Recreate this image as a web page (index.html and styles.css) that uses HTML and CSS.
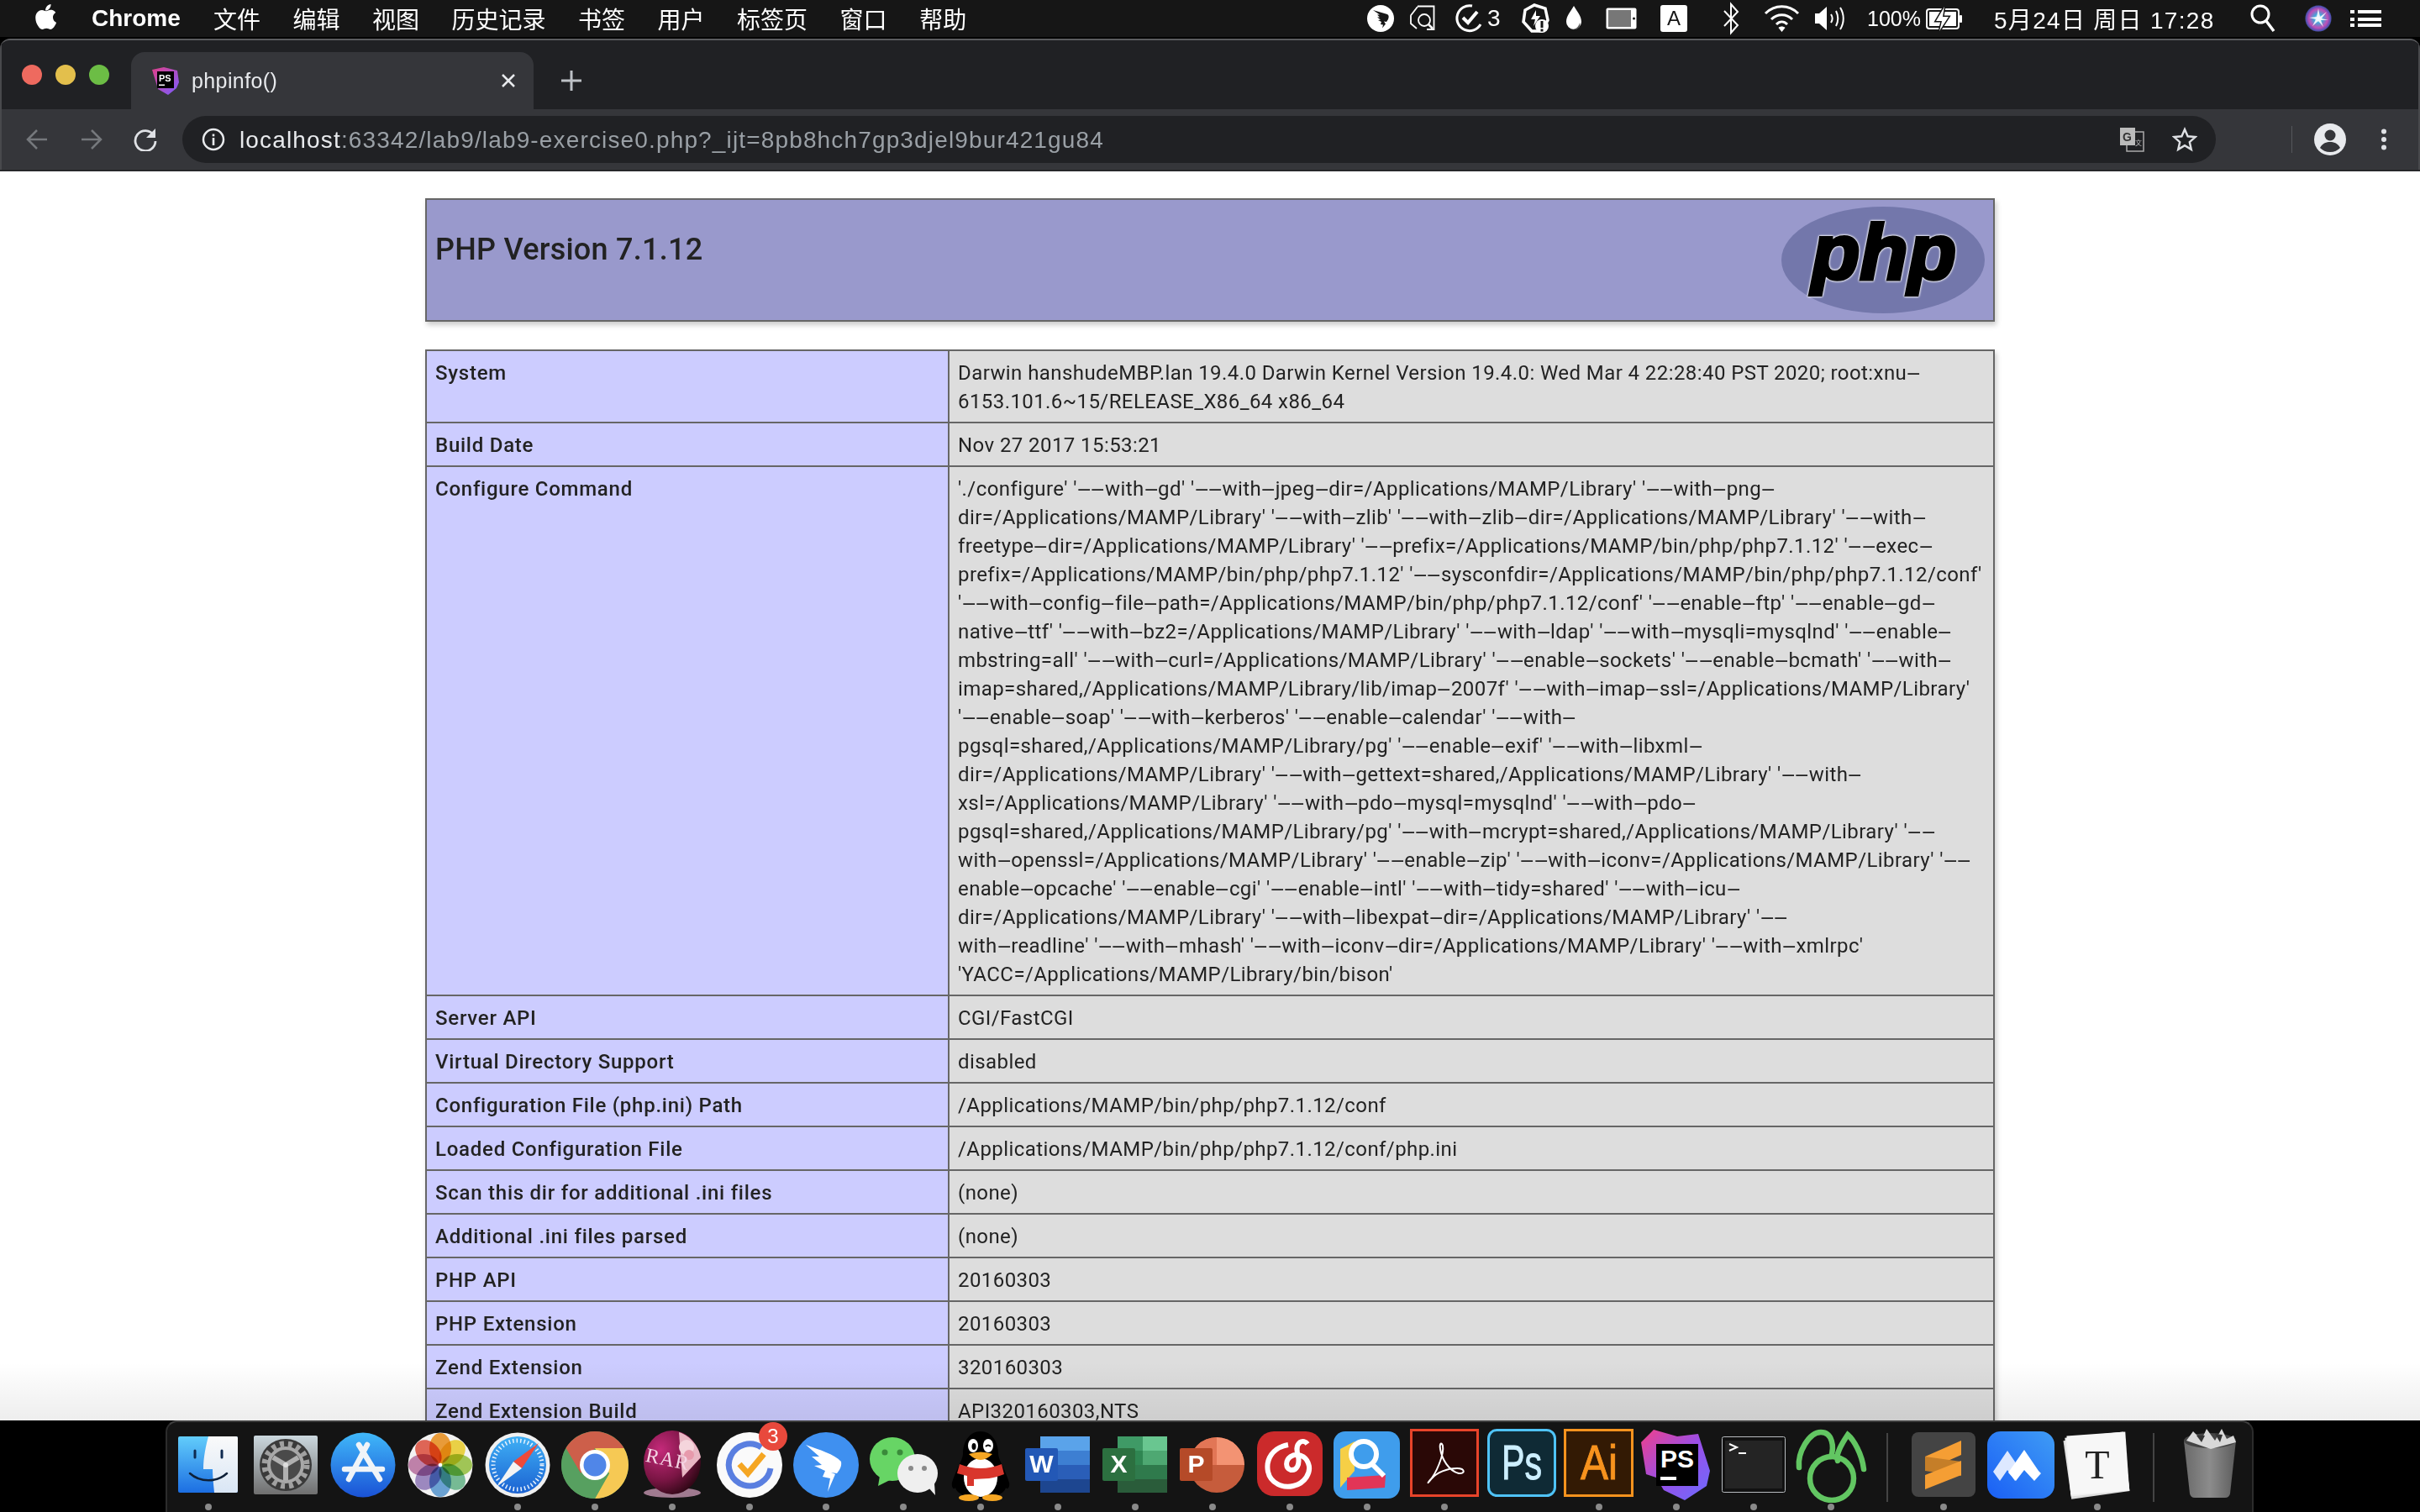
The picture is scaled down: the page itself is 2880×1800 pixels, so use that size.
FILE: index.html
```html
<!DOCTYPE html>
<html lang="zh">
<head>
<meta charset="utf-8">
<title>phpinfo()</title>
<link rel="stylesheet" href="styles.css">
</head>
<body>
<div class="desktop">
  <header class="menubar">
    <svg class="apple" width="26" height="32" viewBox="0 0 26 32"><path fill="#fff" d="M18.5 1c.2 2.2-.6 3.900-1.700 5.200-1.200 1.400-3 2.400-4.700 2.300-.2-2 .7-3.900 1.700-5.100C15 2 17 1 18.500 1zM24.300 11c-.2.100-3.400 2-3.300 5.800.1 4.500 4 6 4.100 6-.1.100-.6 2.200-2.100 4.300-1.300 1.900-2.600 3.700-4.700 3.800-2 0-2.700-1.200-5-1.200s-3.100 1.200-5 1.300c-2 .1-3.600-2-4.900-3.900C.8 23.300-1.200 16.500 1.600 11.800 3 9.400 5.400 7.900 8 7.900c2 0 3.800 1.300 5 1.300 1.200 0 3.300-1.600 5.600-1.400 1 0 3.800.4 5.700 3.200z"/></svg>
    <span class="menu-app">Chrome</span>
    <nav class="menu-items"><span>文件</span><span>编辑</span><span>视图</span><span>历史记录</span><span>书签</span><span>用户</span><span>标签页</span><span>窗口</span><span>帮助</span></nav>
    <div class="tray">
      <svg width="51" height="44" viewBox="0 0 51 44"><circle cx="16" cy="22" r="16" fill="#fff"/><path fill="#161616" d="M7 12l17 5c2 1 2 3 1 6l-2 3-3-.5 2 3-4 5 1-4-3-.5 1-3-4-2 3-.5-4-3 3 0-3-3 3 0z"/></svg>
      <svg width="53" height="44" viewBox="0 0 53 44"><g fill="none" stroke="#fff" stroke-width="1.800"><path d="M9 7.500H28.500V35H20"/><path d="M.5 19L9 8M1 19v9l7 6"/><circle cx="17" cy="24" r="7"/><path d="M22 29l5 5" stroke-width="2.500"/></g></svg>
      <svg width="39" height="44" viewBox="0 0 39 44"><path d="M21 7A15 15 0 1 0 31 29" fill="none" stroke="#fff" stroke-width="3"/><path d="M10 21l6 6 11-13" fill="none" stroke="#fff" stroke-width="4"/></svg>
      <span class="tray-num">3</span>
      <svg width="52" height="44" viewBox="0 0 52 44"><path d="M15 6l13 4 3 14-7 13-12 0-10-11 2-14z" fill="none" stroke="#fff" stroke-width="3.500"/><path d="M17 12l-6 11 5 0-2 8 8-12-5 0z" fill="#fff"/><circle cx="24" cy="31" r="8" fill="#fff"/><rect x="22.500" y="25" width="3" height="8" fill="#161616"/><rect x="22.500" y="34.500" width="3" height="3" fill="#161616"/></svg>
      <svg width="47" height="44" viewBox="0 0 47 44"><path d="M10 7c4 7 9 12 9 19a9 9 0 0 1-18 0c0-7 5-12 9-19z" fill="#fff"/><path d="M17 27c-1 5-5 8-9 8 5 1 11-2 9-8z" fill="#555"/></svg>
      <svg width="66" height="44" viewBox="0 0 66 44"><rect x="1.500" y="9.500" width="36" height="25" rx="2" fill="#fff"/><rect x="4" y="12" width="27" height="20" fill="#777"/><circle cx="34.500" cy="22" r="1.500" fill="#161616"/></svg>
      <div class="tray-a"><span>A</span></div>
      <svg width="51" height="44" viewBox="0 0 51 44"><path d="M4 13l16 17-8 9V5l8 9-16 17" fill="none" stroke="#fff" stroke-width="2"/></svg>
      <svg width="60" height="44" viewBox="0 0 60 44"><g fill="none" stroke="#fff" stroke-width="3"><path d="M2 16c11-11 28-11 39 0"/><path d="M9 23c7-7 18-7 25 0"/><path d="M15 29c4-4 9-4 13 0"/></g><path d="M21.500 38l-4-5c2-2 6-2 8 0z" fill="#fff"/></svg>
      <svg width="63" height="44" viewBox="0 0 63 44"><path d="M1 16h5l9-8v28l-9-8H1z" fill="#fff"/><path d="M20 17c2 3 2 7 0 10M26 13c3 6 3 12 0 18M31 9c5 8 5 18 0 26" fill="none" stroke="#fff" stroke-width="2"/></svg>
      <span class="tray-pct">100%</span>
      <svg width="81" height="44" viewBox="0 0 81 44"><rect x="1" y="11" width="38" height="23" rx="3" fill="none" stroke="#fff" stroke-width="2"/><rect x="4" y="14" width="32" height="17" fill="#fff"/><rect x="40" y="18" width="3" height="9" rx="1" fill="#fff"/><path d="M22 8l-10 17h7l-3 12 11-17h-7z" fill="#161616" stroke="#161616" stroke-width="3"/><path d="M22 8l-10 17h7l-3 12 11-17h-7z" fill="#fff"/></svg>
      <span class="tray-date">5月24日 周日 17:28</span>
      <svg width="65" height="44" viewBox="0 0 65 44"><circle cx="12" cy="17" r="10" fill="none" stroke="#fff" stroke-width="3"/><path d="M19 25l9 12" stroke="#fff" stroke-width="3.500"/></svg>
      <svg width="54" height="44" viewBox="0 0 54 44"><defs><radialGradient id="siri" cx=".5" cy=".5" r=".55"><stop offset="0" stop-color="#e8f0ff"/><stop offset=".3" stop-color="#44a6d8"/><stop offset=".65" stop-color="#c04fb8"/><stop offset=".9" stop-color="#3f4fb0"/><stop offset="1" stop-color="#cfcfe0"/></radialGradient></defs><circle cx="16" cy="22" r="15.500" fill="url(#siri)"/><path d="M16 10l2 10 8-6-6 8 8 2-9 0 3 8-6-7-7 6 4-8-8-2 9-1z" fill="#fff" opacity=".85"/></svg>
      <svg width="83" height="44" viewBox="0 0 83 44"><g fill="#fff"><rect x="0" y="12" width="5" height="4"/><rect x="9" y="12" width="28" height="4"/><rect x="0" y="21" width="5" height="4"/><rect x="9" y="21" width="28" height="4"/><rect x="0" y="28" width="5" height="4"/><rect x="9" y="28" width="28" height="4"/></g></svg>
    </div>
  </header>

  <main class="browser">
    <div class="tabstrip">
      <div class="lights"><i class="light red"></i><i class="light yellow"></i><i class="light green"></i></div>
      <div class="tab">
        <svg class="favicon" width="33" height="33" viewBox="0 0 33 33"><defs><linearGradient id="fav" x1="0" y1="0" x2="1" y2="1"><stop offset="0" stop-color="#e0408a"/><stop offset="1" stop-color="#7a5cff"/></linearGradient></defs><path d="M1 3l14-3 16 4 2 14-3 7-10 8-12-7z" fill="url(#fav)"/><rect x="7" y="5" width="20" height="20" fill="#000"/><text class="fav-text" x="9" y="17">PS</text><rect x="9" y="20.500" width="7" height="1.500" fill="#fff"/></svg>
        <span class="tab-title">phpinfo()</span>
        <svg class="tab-close" width="18" height="18" viewBox="0 0 18 18"><path d="M2 2l14 14M16 2L2 16" stroke="#e8eaed" stroke-width="2.500"/></svg>
      </div>
      <svg class="newtab" width="24" height="24" viewBox="0 0 24 24"><path d="M12 0v24M0 12h24" stroke="#bdc1c6" stroke-width="3"/></svg>
    </div>
    <div class="toolbar">
      <svg class="nav-back" width="26" height="26" viewBox="0 0 26 26"><path d="M25 13H2M13 2L2 13l11 11" fill="none" stroke="#75787c" stroke-width="2.500"/></svg>
      <svg class="nav-fwd" width="26" height="26" viewBox="0 0 26 26"><path d="M1 13h23M13 2l11 11-11 11" fill="none" stroke="#75787c" stroke-width="2.500"/></svg>
      <svg class="nav-reload" width="28" height="28" viewBox="0 0 28 28"><path d="M24 9A12 12 0 1 0 26 16" fill="none" stroke="#dfe1e5" stroke-width="2.800"/><path d="M26 1v11H15z" fill="#dfe1e5"/></svg>
      <div class="omnibox">
        <svg class="info" width="28" height="28" viewBox="0 0 28 28"><circle cx="14" cy="14" r="12" fill="none" stroke="#e8eaed" stroke-width="2.500"/><rect x="12.700" y="12" width="2.600" height="9" fill="#e8eaed"/><rect x="12.700" y="7.500" width="2.600" height="2.800" fill="#e8eaed"/></svg>
        <span class="url"><b class="url-host">localhost</b>:63342/lab9/lab9-exercise0.php?_ijt=8pb8hch7gp3djel9bur421gu84</span>
        <svg class="translate" width="30" height="30" viewBox="0 0 30 30"><rect x="9" y="6" width="20" height="23" fill="none" stroke="#aaa" stroke-width="1.500"/><rect x="1" y="1" width="18" height="21" fill="#bbb"/><text class="tr-g" x="4" y="17">G</text><text class="tr-z" x="19" y="22">文</text></svg>
        <svg class="star" width="30" height="30" viewBox="0 0 30 30"><path d="M15 3l3.600 8.300 9 .8-6.800 6 2 8.800-7.800-4.700-7.800 4.700 2-8.800-6.800-6 9-.8z" fill="none" stroke="#dfe1e5" stroke-width="2.400"/></svg>
      </div>
      <i class="tool-sep"></i>
      <svg class="profile" width="38" height="38" viewBox="0 0 38 38"><circle cx="19" cy="19" r="19" fill="#e8eaed"/><circle cx="19" cy="14" r="6.500" fill="#35363a"/><path d="M7 29c3-6 8-7 12-7s9 1 12 7c-3 3-7 5-12 5s-9-2-12-5z" fill="#35363a"/></svg>
      <svg class="dots" width="8" height="26" viewBox="0 0 8 26"><circle cx="4" cy="3.500" r="3" fill="#dfe1e5"/><circle cx="4" cy="13" r="3" fill="#dfe1e5"/><circle cx="4" cy="22.500" r="3" fill="#dfe1e5"/></svg>
    </div>

    <div class="page">
      <table class="php-head">
        <tr><td class="h-cell"><div class="h-row"><h1>PHP Version 7.1.12</h1>
          <svg class="php-logo" width="242" height="127" viewBox="0 0 242 127"><defs><linearGradient id="logo" x1="0" y1="0" x2="1" y2="1"><stop offset="0" stop-color="#8a8ec0"/><stop offset=".15" stop-color="#7377ab"/><stop offset=".85" stop-color="#7377ab"/><stop offset="1" stop-color="#4c4f8c"/></linearGradient></defs><ellipse cx="121" cy="63.500" rx="121" ry="63.500" fill="url(#logo)"/><text class="php-word" x="36" y="86" textLength="172" lengthAdjust="spacingAndGlyphs">php</text></svg>
        </div></td></tr>
      </table>
      <table class="php-info">
        <tr><td class="e">System</td><td class="v">Darwin hanshudeMBP.lan 19.4.0 Darwin Kernel Version 19.4.0: Wed Mar 4 22:28:40 PST 2020; root:xnu<b>-</b><br>6153.101.6~15/RELEASE_X86_64 x86_64</td></tr>
        <tr><td class="e">Build Date</td><td class="v">Nov 27 2017 15:53:21</td></tr>
        <tr><td class="e">Configure Command</td><td class="v">'./configure' '<b>-</b><b>-</b>with<b>-</b>gd' '<b>-</b><b>-</b>with<b>-</b>jpeg<b>-</b>dir=/Applications/MAMP/Library' '<b>-</b><b>-</b>with<b>-</b>png<b>-</b><br>dir=/Applications/MAMP/Library' '<b>-</b><b>-</b>with<b>-</b>zlib' '<b>-</b><b>-</b>with<b>-</b>zlib<b>-</b>dir=/Applications/MAMP/Library' '<b>-</b><b>-</b>with<b>-</b><br>freetype<b>-</b>dir=/Applications/MAMP/Library' '<b>-</b><b>-</b>prefix=/Applications/MAMP/bin/php/php7.1.12' '<b>-</b><b>-</b>exec<b>-</b><br>prefix=/Applications/MAMP/bin/php/php7.1.12' '<b>-</b><b>-</b>sysconfdir=/Applications/MAMP/bin/php/php7.1.12/conf'<br>'<b>-</b><b>-</b>with<b>-</b>config<b>-</b>file<b>-</b>path=/Applications/MAMP/bin/php/php7.1.12/conf' '<b>-</b><b>-</b>enable<b>-</b>ftp' '<b>-</b><b>-</b>enable<b>-</b>gd<b>-</b><br>native<b>-</b>ttf' '<b>-</b><b>-</b>with<b>-</b>bz2=/Applications/MAMP/Library' '<b>-</b><b>-</b>with<b>-</b>ldap' '<b>-</b><b>-</b>with<b>-</b>mysqli=mysqlnd' '<b>-</b><b>-</b>enable<b>-</b><br>mbstring=all' '<b>-</b><b>-</b>with<b>-</b>curl=/Applications/MAMP/Library' '<b>-</b><b>-</b>enable<b>-</b>sockets' '<b>-</b><b>-</b>enable<b>-</b>bcmath' '<b>-</b><b>-</b>with<b>-</b><br>imap=shared,/Applications/MAMP/Library/lib/imap<b>-</b>2007f' '<b>-</b><b>-</b>with<b>-</b>imap<b>-</b>ssl=/Applications/MAMP/Library'<br>'<b>-</b><b>-</b>enable<b>-</b>soap' '<b>-</b><b>-</b>with<b>-</b>kerberos' '<b>-</b><b>-</b>enable<b>-</b>calendar' '<b>-</b><b>-</b>with<b>-</b><br>pgsql=shared,/Applications/MAMP/Library/pg' '<b>-</b><b>-</b>enable<b>-</b>exif' '<b>-</b><b>-</b>with<b>-</b>libxml<b>-</b><br>dir=/Applications/MAMP/Library' '<b>-</b><b>-</b>with<b>-</b>gettext=shared,/Applications/MAMP/Library' '<b>-</b><b>-</b>with<b>-</b><br>xsl=/Applications/MAMP/Library' '<b>-</b><b>-</b>with<b>-</b>pdo<b>-</b>mysql=mysqlnd' '<b>-</b><b>-</b>with<b>-</b>pdo<b>-</b><br>pgsql=shared,/Applications/MAMP/Library/pg' '<b>-</b><b>-</b>with<b>-</b>mcrypt=shared,/Applications/MAMP/Library' '<b>-</b><b>-</b><br>with<b>-</b>openssl=/Applications/MAMP/Library' '<b>-</b><b>-</b>enable<b>-</b>zip' '<b>-</b><b>-</b>with<b>-</b>iconv=/Applications/MAMP/Library' '<b>-</b><b>-</b><br>enable<b>-</b>opcache' '<b>-</b><b>-</b>enable<b>-</b>cgi' '<b>-</b><b>-</b>enable<b>-</b>intl' '<b>-</b><b>-</b>with<b>-</b>tidy=shared' '<b>-</b><b>-</b>with<b>-</b>icu<b>-</b><br>dir=/Applications/MAMP/Library' '<b>-</b><b>-</b>with<b>-</b>libexpat<b>-</b>dir=/Applications/MAMP/Library' '<b>-</b><b>-</b><br>with<b>-</b>readline' '<b>-</b><b>-</b>with<b>-</b>mhash' '<b>-</b><b>-</b>with<b>-</b>iconv<b>-</b>dir=/Applications/MAMP/Library' '<b>-</b><b>-</b>with<b>-</b>xmlrpc'<br>'YACC=/Applications/MAMP/Library/bin/bison'</td></tr>
        <tr><td class="e">Server API</td><td class="v">CGI/FastCGI</td></tr>
        <tr><td class="e">Virtual Directory Support</td><td class="v">disabled</td></tr>
        <tr><td class="e">Configuration File (php.ini) Path</td><td class="v">/Applications/MAMP/bin/php/php7.1.12/conf</td></tr>
        <tr><td class="e">Loaded Configuration File</td><td class="v">/Applications/MAMP/bin/php/php7.1.12/conf/php.ini</td></tr>
        <tr><td class="e">Scan this dir for additional .ini files</td><td class="v">(none)</td></tr>
        <tr><td class="e">Additional .ini files parsed</td><td class="v">(none)</td></tr>
        <tr><td class="e">PHP API</td><td class="v">20160303</td></tr>
        <tr><td class="e">PHP Extension</td><td class="v">20160303</td></tr>
        <tr><td class="e">Zend Extension</td><td class="v">320160303</td></tr>
        <tr><td class="e">Zend Extension Build</td><td class="v">API320160303,NTS</td></tr>
      </table>
    </div>
  </main>

  <footer class="dock-row">
    <div class="dock">
      <div class="slot run"><svg width="92" height="96" viewBox="0 0 92 96"><defs><linearGradient id="fa" x1="0" y1="0" x2="0" y2="1"><stop offset="0" stop-color="#62cdfb"/><stop offset="1" stop-color="#1c6ee2"/></linearGradient><linearGradient id="fb" x1="0" y1="0" x2="0" y2="1"><stop offset="0" stop-color="#fafafa"/><stop offset="1" stop-color="#d9e6f5"/></linearGradient></defs><rect x="10" y="17" width="71" height="67" rx="2" fill="url(#fa)"/><path d="M46 17h33a2 2 0 0 1 2 2v63a2 2 0 0 1-2 2H53c-1-10-2-20-2-28H40c0-14 3-28 6-39z" fill="url(#fb)"/><path d="M30 34v8M62 34v8" stroke="#0e2a50" stroke-width="3" stroke-linecap="round"/><path d="M24 61c12 11 32 11 44 0" fill="none" stroke="#0e2038" stroke-width="2.500" stroke-linecap="round"/></svg><i class="dot"></i></div>
      <div class="slot"><svg width="92" height="96" viewBox="0 0 92 96"><defs><linearGradient id="sp" x1="0" y1="0" x2="0" y2="1"><stop offset="0" stop-color="#cbd8de"/><stop offset="1" stop-color="#6f6f6f"/></linearGradient></defs><rect x="8" y="16" width="76" height="70" rx="2" fill="url(#sp)"/><circle cx="46" cy="51" r="31" fill="#3a3a3a"/><circle cx="46" cy="51" r="25" fill="none" stroke="#a0a0a0" stroke-width="7" stroke-dasharray="5 5"/><circle cx="46" cy="51" r="20" fill="#4a4a4a" stroke="#a8a8a8" stroke-width="4"/><path d="M46 51l-15-9M46 51l15-9M46 51v18" stroke="#b0b0b0" stroke-width="6"/><circle cx="46" cy="51" r="3" fill="#ddd"/></svg><i class="dot off"></i></div>
      <div class="slot"><svg width="92" height="96" viewBox="0 0 92 96"><defs><linearGradient id="as" x1="0" y1="0" x2="0" y2="1"><stop offset="0" stop-color="#40b8f9"/><stop offset="1" stop-color="#1a52d6"/></linearGradient></defs><circle cx="46" cy="51" r="38.500" fill="url(#as)"/><path d="M41 27l25 41M51 27L29 68M24 56h45" stroke="#f0f4f8" stroke-width="6.500" stroke-linecap="round"/></svg><i class="dot off"></i></div>
      <div class="slot"><svg width="92" height="96" viewBox="0 0 92 96"><circle cx="46" cy="51" r="38.500" fill="#f2f2f2"/><g class="petals"><ellipse cx="46" cy="31" rx="13" ry="18" fill="#f5a33c" transform="rotate(0 46 51)"/><ellipse cx="46" cy="31" rx="13" ry="18" fill="#f6dc4a" transform="rotate(45 46 51)"/><ellipse cx="46" cy="31" rx="13" ry="18" fill="#a9d05a" transform="rotate(90 46 51)"/><ellipse cx="46" cy="31" rx="13" ry="18" fill="#7cc49c" transform="rotate(135 46 51)"/><ellipse cx="46" cy="31" rx="13" ry="18" fill="#70aade" transform="rotate(180 46 51)"/><ellipse cx="46" cy="31" rx="13" ry="18" fill="#a48fca" transform="rotate(225 46 51)"/><ellipse cx="46" cy="31" rx="13" ry="18" fill="#c888b2" transform="rotate(270 46 51)"/><ellipse cx="46" cy="31" rx="13" ry="18" fill="#ea6a5a" transform="rotate(315 46 51)"/></g><circle cx="46" cy="51" r="2" fill="#fff"/></svg><i class="dot off"></i></div>
      <div class="slot run"><svg width="92" height="96" viewBox="0 0 92 96"><defs><linearGradient id="sf" x1="0" y1="0" x2="0" y2="1"><stop offset="0" stop-color="#3fb0f5"/><stop offset="1" stop-color="#1b62d2"/></linearGradient></defs><circle cx="46" cy="51" r="38.500" fill="#f0f0f0"/><circle cx="46" cy="51" r="34" fill="url(#sf)"/><circle cx="46" cy="51" r="29" fill="none" stroke="#e8f2fc" stroke-width="5" stroke-dasharray="1.500 3"/><path d="M71 25L41 47l10 8z" fill="#ee4a3a"/><path d="M21 77l30-22-10-8z" fill="#f4f4f4"/></svg><i class="dot"></i></div>
      <div class="slot run"><svg width="92" height="96" viewBox="0 0 92 96"><circle cx="46" cy="51" r="40" fill="#5aa05a"/><path d="M11.400 31A40 40 0 0 1 80.600 31L46 31 29 61z" fill="#cd5f4a"/><path d="M80.600 31A40 40 0 0 1 46 91L63 61 46 31z" fill="#f6c954"/><path d="M46 91A40 40 0 0 1 11.400 31L29 61 63 61z" fill="#57a060"/><circle cx="46" cy="51" r="18" fill="#fff"/><circle cx="46" cy="51" r="13.500" fill="#5086e8"/></svg><i class="dot"></i></div>
      <div class="slot run"><svg width="92" height="96" viewBox="0 0 92 96"><defs><radialGradient id="rr" cx=".3" cy=".3" r=".8"><stop offset="0" stop-color="#c42a7a"/><stop offset=".6" stop-color="#7a1544"/><stop offset="1" stop-color="#2a0612"/></radialGradient></defs><ellipse cx="46" cy="84" rx="34" ry="6" fill="#a07a90"/><ellipse cx="46" cy="48" rx="34" ry="38" fill="url(#rr)"/><path d="M54 12c14 4 24 18 26 30L58 66z" fill="#e9b7c4"/><circle cx="63" cy="30" r="9" fill="#f5d5dc"/><circle cx="66" cy="39" r="6" fill="#e79aac"/><text class="rar" x="13" y="50" transform="rotate(12 30 50)">RAR</text></svg><i class="dot"></i></div>
      <div class="slot run"><svg width="92" height="96" viewBox="0 0 92 96"><circle cx="46" cy="51" r="39" fill="#fafafa"/><path d="M60 30A25 25 0 1 0 71 55" fill="none" stroke="#5a7fe0" stroke-width="7"/><path d="M34 50l10 11 19-23" fill="none" stroke="#f5a623" stroke-width="7"/><circle cx="74" cy="17" r="17" fill="#e8493c"/><text class="badge" x="74" y="25">3</text></svg><i class="dot"></i></div>
      <div class="slot run"><svg width="92" height="96" viewBox="0 0 92 96"><circle cx="46" cy="51" r="39" fill="#3f90f0"/><path d="M22 27c16 6 34 11 42 20 1 6-2 10-5 14l-7-1 5 2-9 21 3-16-9-2 3-7-13-6 9-1-12-10 9 0z" fill="#fff"/></svg><i class="dot"></i></div>
      <div class="slot run"><svg width="92" height="96" viewBox="0 0 92 96"><ellipse cx="33" cy="44" rx="27" ry="26" fill="#67d565"/><path d="M18 64l-2 12 14-7z" fill="#67d565"/><circle cx="24" cy="36" r="3.500" fill="#3a8a3a"/><circle cx="42" cy="36" r="3.500" fill="#3a8a3a"/><ellipse cx="63" cy="61" rx="24" ry="23" fill="#efefef"/><path d="M76 78l8 9-1-14z" fill="#efefef"/><circle cx="55" cy="55" r="3" fill="#8a8a8a"/><circle cx="71" cy="55" r="3" fill="#8a8a8a"/></svg><i class="dot"></i></div>
      <div class="slot run"><svg width="92" height="96" viewBox="0 0 92 96"><path d="M46 11c13 0 21 12 21 27 0 6 9 20 13 34 1 6-2 9-4 6-2 8-14 12-30 12s-28-4-30-12c-2 3-5 0-4-6 4-14 13-28 13-34 0-15 8-27 21-27z" fill="#000"/><ellipse cx="46" cy="66" rx="20" ry="23" fill="#fff"/><ellipse cx="37" cy="28" rx="6" ry="8" fill="#fff"/><ellipse cx="55" cy="28" rx="6" ry="8" fill="#fff"/><ellipse cx="38" cy="29" rx="2.500" ry="4" fill="#000"/><path d="M52 29q3-3 6 0" stroke="#000" stroke-width="2" fill="none"/><path d="M32 38q14-5 28 0-14 14-28 0z" fill="#f5a623"/><path d="M21 50q25 10 50 0l3 12q-10 4-18 5l-18 1v8h-8V64l-12-3z" fill="#d9362c"/><ellipse cx="32" cy="90" rx="12" ry="4" fill="#f5a623"/><ellipse cx="60" cy="90" rx="12" ry="4" fill="#f5a623"/></svg><i class="dot"></i></div>
      <div class="slot run"><svg width="92" height="96" viewBox="0 0 92 96"><rect x="25" y="17" width="59" height="17" fill="#5aa3ea"/><rect x="25" y="34" width="59" height="17" fill="#3d7fd2"/><rect x="25" y="51" width="59" height="17" fill="#2a5eb8"/><rect x="25" y="68" width="59" height="16" fill="#1d4690"/><rect x="7" y="31" width="39" height="39" rx="2" fill="#2358b6"/><text class="office" x="26.500" y="60">W</text></svg><i class="dot"></i></div>
      <div class="slot run"><svg width="92" height="96" viewBox="0 0 92 96"><rect x="25" y="17" width="30" height="17" fill="#3f9a66"/><rect x="55" y="17" width="29" height="17" fill="#69c690"/><rect x="25" y="34" width="30" height="17" fill="#2f8652"/><rect x="55" y="34" width="29" height="17" fill="#4ea872"/><rect x="25" y="51" width="59" height="17" fill="#2f7a4c"/><rect x="25" y="68" width="59" height="16" fill="#2a5c3a"/><rect x="7" y="31" width="39" height="39" rx="2" fill="#2c7040"/><text class="office" x="26.500" y="60">X</text></svg><i class="dot"></i></div>
      <div class="slot run"><svg width="92" height="96" viewBox="0 0 92 96"><circle cx="51" cy="51" r="33" fill="#c65c3c"/><path d="M51 18a33 33 0 0 1 33 33H51z" fill="#f39373"/><path d="M51 18a33 33 0 0 0-33 33h33z" fill="#e27656"/><rect x="7" y="31" width="39" height="39" rx="2" fill="#b54a28"/><text class="office" x="26.500" y="60">P</text></svg><i class="dot"></i></div>
      <div class="slot run"><svg width="92" height="96" viewBox="0 0 92 96"><rect x="7" y="11" width="78" height="77" rx="20" fill="#cb2a2b"/><path d="M44 27c-18 3-27 17-24 32 3 14 18 20 30 17 14-3 22-16 18-27-3-9-14-13-21-8-7 5-6 14 0 16 7 1 11-6 9-16-2-7-3-13 2-17 3-2 7-1 9 2" fill="none" stroke="#fff" stroke-width="6"/></svg><i class="dot"></i></div>
      <div class="slot run"><svg width="92" height="96" viewBox="0 0 92 96"><rect x="6" y="11" width="79" height="80" rx="14" fill="#3f9dec"/><path d="M14 78V32l17-9v35z" fill="#f6cf46"/><path d="M22 66l46-3-1 15-45 3z" fill="#e23557"/><circle cx="42" cy="38" r="15" fill="#3f9dec" stroke="#fff" stroke-width="6"/><path d="M52 50l14 14" stroke="#fff" stroke-width="6"/></svg><i class="dot"></i></div>
      <div class="slot run"><svg width="92" height="96" viewBox="0 0 92 96"><rect x="6.500" y="9.500" width="79" height="78" fill="#2a0806" stroke="#e8442a" stroke-width="3"/><path d="M28 70c8-8 18-32 16-42-2-5-4-2-3 4 2 12 10 26 22 29 8 1 8-6-2-6-12 0-24 5-30 12-4 5-6 7-3 3z" fill="none" stroke="#fff" stroke-width="2"/></svg><i class="dot"></i></div>
      <div class="slot"><svg width="92" height="96" viewBox="0 0 92 96"><rect x="6.500" y="9.500" width="79" height="78" rx="10" fill="#0f2a35" stroke="#4fc3f7" stroke-width="3"/><text class="adobe ps" x="46" y="68" textLength="48" lengthAdjust="spacingAndGlyphs">Ps</text></svg><i class="dot off"></i></div>
      <div class="slot run"><svg width="92" height="96" viewBox="0 0 92 96"><rect x="5.500" y="9.500" width="80" height="78" fill="#331a04" stroke="#f7931e" stroke-width="3"/><text class="adobe ai" x="46" y="68" textLength="44" lengthAdjust="spacingAndGlyphs">Ai</text></svg><i class="dot"></i></div>
      <div class="slot run"><svg width="92" height="96" viewBox="0 0 92 96"><defs><linearGradient id="ps" x1="0" y1="0" x2="1" y2="1"><stop offset="0" stop-color="#f0408a"/><stop offset=".5" stop-color="#9a4fe8"/><stop offset="1" stop-color="#6a6cff"/></linearGradient></defs><path d="M4 24l15-15 28 8 25-3 14 44-4 18-26 17-25-12-9-15-12-4z" fill="url(#ps)"/><rect x="22" y="26" width="50" height="50" fill="#000"/><text class="pstorm" x="27" y="54">PS</text><rect x="27" y="65" width="19" height="4" fill="#fff"/></svg><i class="dot"></i></div>
      <div class="slot run"><svg width="92" height="96" viewBox="0 0 92 96"><rect x="8.500" y="17.500" width="75" height="66" rx="2" fill="#111" stroke="#b8bcc0"/><rect x="12" y="22" width="68" height="57" fill="#242424"/><path d="M17 26l9 4-9 4" fill="none" stroke="#fff" stroke-width="2"/><path d="M28 37h9" stroke="#fff" stroke-width="2"/></svg><i class="dot"></i></div>
      <div class="slot run"><svg width="92" height="96" viewBox="0 0 92 96"><g fill="none" stroke="#62c662" stroke-width="6.500" stroke-linecap="round"><circle cx="47" cy="67" r="26"/><path d="M8 54C6 36 20 12 34 12C48 12 50 30 46 41"/><path d="M85 56C83 38 73 21 66 15C60 24 51 38 54 46"/></g></svg><i class="dot"></i></div>
      <div class="sep"></div>
      <div class="slot run"><svg width="92" height="96" viewBox="0 0 92 96"><rect x="8" y="12" width="76" height="77" rx="8" fill="#444"/><path d="M24 41l43-19v17L24 58z" fill="#f59e34"/><path d="M24 41l43 6v17L24 58z" fill="#c57e28"/><path d="M24 63l43-17v17L24 80z" fill="#f59e34"/></svg><i class="dot"></i></div>
      <div class="slot"><svg width="92" height="96" viewBox="0 0 92 96"><defs><linearGradient id="lk" x1="0" y1="1" x2="1" y2="0"><stop offset="0" stop-color="#1a5ff5"/><stop offset="1" stop-color="#3f9cf5"/></linearGradient></defs><rect x="6" y="11" width="80" height="80" rx="16" fill="url(#lk)"/><path d="M13 59l17-25 17 25-8 11-9-13-9 13z" fill="#dde8ff"/><path d="M31 60l19-27 17 25 3 3-8 9-12-13-10 13z" fill="#fff"/></svg><i class="dot off"></i></div>
      <div class="slot run"><svg width="92" height="96" viewBox="0 0 92 96"><rect x="10" y="17" width="70" height="70" fill="#ddd" transform="rotate(-8 46 52)"/><rect x="11" y="15" width="70" height="70" fill="#f0f0f0" transform="rotate(-6 46 52)"/><rect x="12" y="14" width="70" height="70" fill="#f7f7f7" transform="rotate(-4 46 52)"/><text class="typora" x="46" y="67">T</text></svg><i class="dot"></i></div>
      <div class="sep"></div>
      <div class="slot"><svg width="92" height="96" viewBox="0 0 92 96"><defs><linearGradient id="tr" x1="0" y1="0" x2="1" y2="0"><stop offset="0" stop-color="#6a6a6a"/><stop offset=".5" stop-color="#8c8c8c"/><stop offset="1" stop-color="#5c5c5c"/></linearGradient></defs><path d="M15 22h62l-7 63q-1 5-6 5H28q-5 0-6-5z" fill="url(#tr)"/><ellipse cx="46" cy="22" rx="31" ry="9" fill="#444"/><path d="M18 22l8-11 10 10 6-13 10 14 8-14 6 12 8-4 3 8-30 8z" fill="#d8d8d8"/><path d="M30 16l6 8 4-8zM52 14l6 10 3-9z" fill="#333"/></svg><i class="dot off"></i></div>
    </div>
  </footer>
</div>
</body>
</html>
```

FILE: styles.css
```css
* { box-sizing: border-box; }
html, body { margin: 0; padding: 0; }
body { width: 2880px; height: 1800px; overflow: hidden; background: #000; font-family: "Liberation Sans", "Noto Sans CJK SC", sans-serif; }
svg { display: block; flex: none; }

.desktop { width: 2880px; height: 1800px; display: flex; flex-direction: column; }

/* menu bar */
.menubar { height: 44px; flex: none; background: #161616; color: #fff; display: flex; align-items: center; font-size: 28px; font-family: "Liberation Sans", "Noto Sans CJK SC", sans-serif; }
.apple { margin-left: 42px; margin-top: -4px; }
.menu-app { margin-left: 41px; width: 145px; font-weight: 700; }
.menu-items { display: flex; gap: 38.500px; }
.tray { margin-left: auto; width: 1253px; display: flex; align-items: center; }
.tray-num { width: 41px; }
.tray-a { width: 72px; height: 44px; display: flex; align-items: center; }
.tray-a span { width: 32px; height: 32px; background: #fff; color: #161616; border-radius: 3px; font-size: 24px; line-height: 32px; text-align: center; display: block; }
.tray-pct { width: 70px; font-size: 25px; }
.tray-date { width: 305px; white-space: nowrap; letter-spacing: 1.300px; }

/* browser */
.browser { height: 1646px; flex: none; margin-top: 2px; border-top: 2px solid #5a5b5e; border-radius: 12px 12px 0 0; background: #202124; display: flex; flex-direction: column; overflow: hidden; margin-bottom: -1px; }
.tabstrip { height: 82px; flex: none; display: flex; align-items: flex-end; background: #202124; box-shadow: inset 2px 0 0 #48494c, inset -2px 0 0 #48494c; }
.lights { width: 156px; height: 68px; padding-left: 26px; display: flex; gap: 16px; align-items: flex-start; padding-top: 15px; }
.light { width: 24px; height: 24px; border-radius: 50%; display: block; }
.red { background: #ee6a5f; }
.yellow { background: #e3bf4c; }
.green { background: #6cbd45; }
.tab { width: 479px; height: 68px; background: #35363a; border-radius: 16px 16px 0 0; display: flex; align-items: center; padding-left: 24px; color: #e8eaed; }
.fav-text { font: 700 11px "Liberation Sans", sans-serif; fill: #fff; }
.tab-title { margin-left: 15px; width: 372px; font-size: 25px; letter-spacing: .400px; }
.tab-close { flex: none; margin-left: -4px; }
.newtab { margin: 0 0 22px 33px; }
.toolbar { height: 74px; flex: none; background: #35363a; display: flex; align-items: center; border-bottom: 2px solid #26272a; box-shadow: inset 2px 0 0 #48494c, inset -2px 0 0 #48494c; }
.nav-back { margin-left: 31px; }
.nav-fwd { margin-left: 39px; }
.nav-reload { margin-left: 37px; }
.omnibox { width: 2420px; height: 56px; margin-left: 30px; background: #202124; border-radius: 28px; display: flex; align-items: center; padding-left: 23px; }
.url { margin-left: 17px; width: 2237px; padding-top: 2px; font-size: 28px; letter-spacing: 1.150px; color: #9aa0a6; white-space: nowrap; }
.url-host { color: #e8eaed; font-weight: 400; }
.tr-g { font: 700 14px "Liberation Sans", sans-serif; fill: #333; }
.tr-z { font: 8px "Noto Sans CJK SC", sans-serif; fill: #bbb; }
.star { margin-left: 33px; }
.tool-sep { width: 1px; height: 32px; background: #55575b; margin-left: 90px; display: block; }
.profile { margin-left: 26px; }
.dots { margin-left: 41px; }

/* page */
.page { flex: 1; min-height: 0; background: #fff; color: #222; overflow: hidden; position: relative; padding-top: 32px; font-size: 24px; font-family: "Roboto", "Noto Sans CJK SC", sans-serif; }
.page::after { content: ""; position: absolute; left: 0; right: 0; bottom: 0; height: 70px; background: linear-gradient(rgba(0,0,0,0), rgba(0,0,0,.07)); }
.php-head, .php-info { width: 1868px; margin: 0 auto; border-collapse: collapse; table-layout: fixed; box-shadow: 2px 4px 6px #ccc; }
.php-info { margin-top: 33px; }
.h-cell { background: #99c; border: 2px solid #666; padding: 8px 10px; }
.h-row { display: flex; justify-content: space-between; align-items: flex-start; }
h1 { font-size: 36px; line-height: 50px; font-weight: 500; margin: 26px 0 0; letter-spacing: .250px; }
.php-word { font: italic 700 92px "Liberation Sans", sans-serif; fill: #000; stroke: #000; stroke-width: 4px; filter: drop-shadow(0 0 1px #fff) drop-shadow(0 0 1px #fff); }
.e, .v { border: 2px solid #666; padding: 9px 10px 7px; line-height: 34px; vertical-align: baseline; white-space: nowrap; }
.e { width: 622px; background: #ccf; font-weight: 500; letter-spacing: .750px; }
.v { background: #ddd; letter-spacing: .420px; }
.v b { display: inline-block; width: 16.500px; font-weight: 400; letter-spacing: 0; text-align: center; transform: scaleX(2.400); }

/* dock */
.dock-row { flex: 1; min-height: 0; display: flex; justify-content: flex-start; padding-left: 197px; background: #000; position: relative; }
.dock { width: 2485px; height: 111px; background: #141414; border-top: 2px solid #3e3e3e; border-left: 2px solid #2c2c2c; border-right: 2px solid #2c2c2c; border-radius: 14px 14px 0 0; display: flex; padding-left: 3px; }
.slot { width: 91.950px; flex: none; display: flex; flex-direction: column; align-items: center; }
.dot { width: 8px; height: 8px; border-radius: 50%; background: #8a8a8a; display: block; margin-top: 1px; }
.dot.off { background: transparent; }
.sep { width: 42px; flex: none; position: relative; display: flex; justify-content: center; padding-top: 13px; }
.sep::before { content: ""; width: 2px; height: 82px; background: #444; display: block; }
.petals ellipse { mix-blend-mode: multiply; }
.badge { font: 24px "Liberation Sans", sans-serif; fill: #fff; text-anchor: middle; }
.rar { font: 24px "Liberation Serif", serif; fill: #f5d5e5; letter-spacing: 1px; }
.office { font: 700 30px "Liberation Sans", sans-serif; fill: #fff; text-anchor: middle; }
.adobe { font: 400 58px "Liberation Sans", sans-serif; text-anchor: middle; stroke-width: 1px; }
.ps { fill: #cdefff; stroke: #cdefff; }
.ai { fill: #f7931e; stroke: #f7931e; }
.pstorm { font: 700 30px "Liberation Sans", sans-serif; fill: #fff; }
.typora { font: 48px "Liberation Serif", serif; fill: #222; text-anchor: middle; }
```
